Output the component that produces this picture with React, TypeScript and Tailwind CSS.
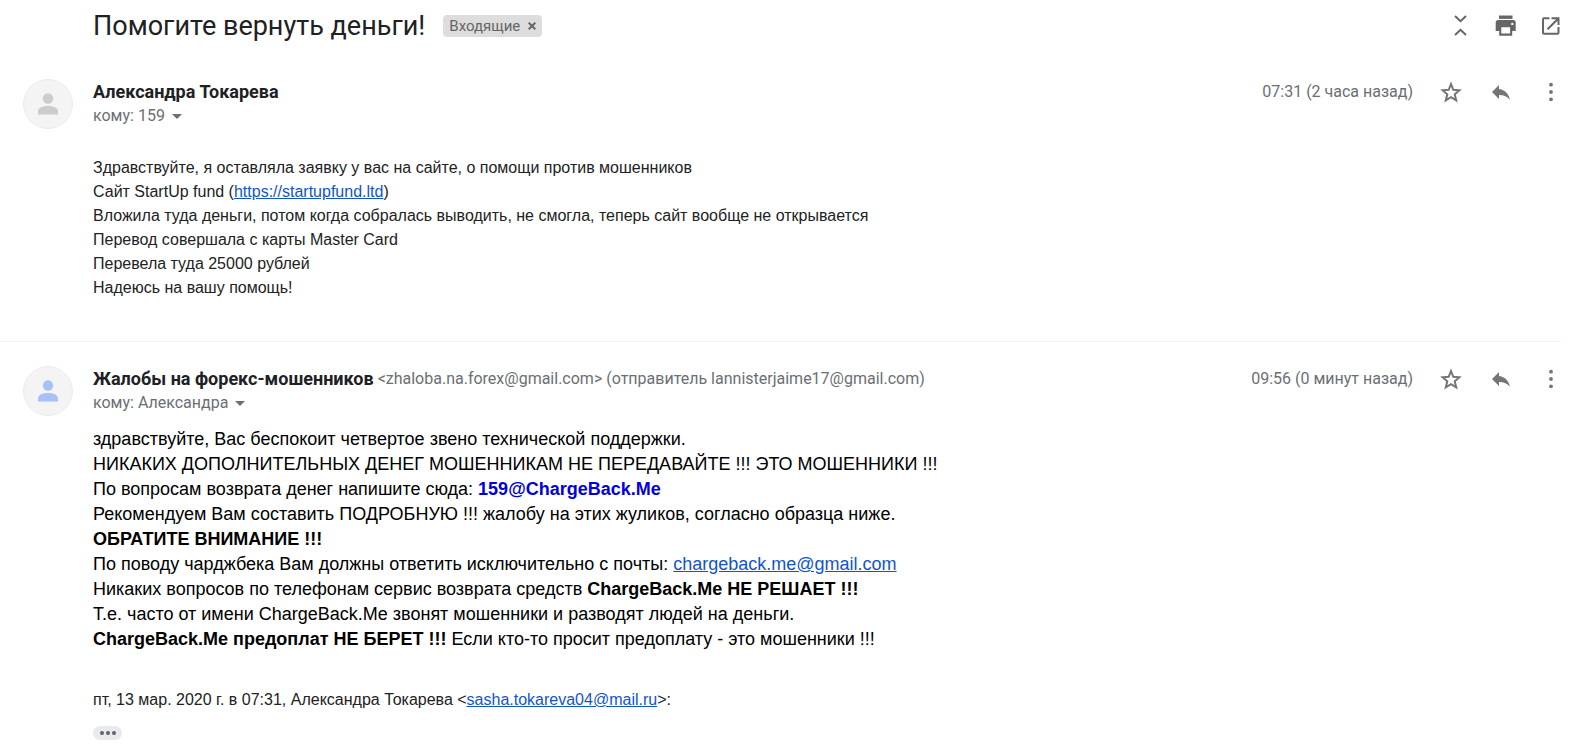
import React from 'react';
import { MdReply, MdArrowDropDown } from 'react-icons/md';

interface MessageProps {
  name: string;
  details?: string;
  to: string;
  time: string;
  avatarClass: string;
  children: React.ReactNode;
}

function PersonIcon({ className }: { className: string }) {
  return (
    <svg viewBox="0 0 22 22" fill="currentColor" className={`size-[22px] ${className}`}>
      <circle cx="11" cy="5.5" r="5.2" />
      <path d="M1 21.5v-3.2C1 14.8 6 13 11 13s10 1.8 10 5.3v3.2z" />
    </svg>
  );
}

function CollapseIcon() {
  return (
    <svg viewBox="0 0 24 24" fill="none" stroke="currentColor" strokeWidth="2" className="size-6">
      <path d="M6 2l5.500 5.200L17 2M6 21l5.500-5.200L17 21" />
    </svg>
  );
}

function PrintIcon() {
  return (
    <svg viewBox="0 0 24 24" fill="currentColor" className="size-6">
      <path d="M5 1.500h13.500v3.400H5z" />
      <path
        fillRule="evenodd"
        d="M4.500 6h14.500a2.700 2.700 0 0 1 2.700 2.700V17h-3.500v4.700H5.200V17H1.700V8.700A2.700 2.700 0 0 1 4.500 6zM7.300 13.300v6.300h8.800v-6.300zM18.300 8.700a1.200 1.200 0 1 0 0 2.400 1.200 1.200 0 0 0 0-2.400z"
      />
    </svg>
  );
}

function NewWindowIcon() {
  return (
    <svg viewBox="0 0 24 24" fill="none" stroke="currentColor" strokeWidth="2" className="size-6">
      <path d="M10.500 4.200H5a1 1 0 0 0-1 1v13.600a1 1 0 0 0 1 1h13.500a1 1 0 0 0 1-1V13" />
      <path d="M12.500 4.200h7V11M19.300 4.500L8.500 15.200" />
    </svg>
  );
}

function StarIcon() {
  return (
    <svg viewBox="0 0 24 24" fill="none" stroke="currentColor" strokeWidth="2" className="size-6">
      <path d="M12 4l2.300 5.800 6.100.5-4.700 4 1.500 6L12 17.100l-5.200 3.200 1.500-6-4.700-4 6.100-.5z" />
    </svg>
  );
}

function MoreIcon() {
  return (
    <svg viewBox="0 0 24 24" fill="currentColor" className="size-6">
      <circle cx="12" cy="4.7" r="1.9" />
      <circle cx="12" cy="12" r="1.9" />
      <circle cx="12" cy="19.3" r="1.9" />
    </svg>
  );
}

function Message({ name, details, to, time, avatarClass, children }: MessageProps) {
  return (
    <article className="flex gap-5 pl-[23px]">
      <div className="flex size-[50px] shrink-0 items-center justify-center rounded-full border border-[#ececec] bg-[#f4f4f4]">
        <PersonIcon className={avatarClass} />
      </div>

      <div className="min-w-0 flex-1">
        <header className="flex items-start justify-between pt-px pr-[18px] font-[Roboto,sans-serif] text-base text-[#6b6f73]">
          <div>
            <div className="flex h-6 items-center gap-1">
              <h2 className="text-lg font-bold text-[#202124]">{name}</h2>
              {details && <span>{details}</span>}
            </div>
            <button className="flex h-6 items-center">
              кому: {to}
              <MdArrowDropDown className="size-6" />
            </button>
          </div>

          <div className="flex h-6 items-center gap-[26px] whitespace-nowrap">
            <time>{time}</time>
            <div className="flex gap-[26px] text-[#757575]">
              <button aria-label="Пометить"><StarIcon /></button>
              <button aria-label="Ответить"><MdReply className="size-6" /></button>
              <button aria-label="Ещё"><MoreIcon /></button>
            </div>
          </div>
        </header>
        {children}
      </div>
    </article>
  );
}

export default function App() {
  return (
    <main className="min-h-screen overflow-hidden bg-white font-['Liberation_Sans',Arial,sans-serif] text-[#222222]">
      <div className="flex items-center justify-between pt-1 pr-[18px] pl-[93px]">
        <div className="flex items-center gap-[18px] font-[Roboto,sans-serif]">
          <h1 className="text-[27px] leading-[44px] text-[#202124]">Помогите вернуть деньги!</h1>
          <span className="flex h-[22px] items-center gap-2 rounded bg-[#dddddd] px-[6px] text-[15px] text-[#666666]">
            Входящие
            <button aria-label="Удалить ярлык">
              <svg viewBox="0 0 8 8" fill="none" stroke="currentColor" strokeWidth="2" className="size-2">
                <path d="M.7.7l6.600 6.600M7.300.7L.7 7.300" />
              </svg>
            </button>
          </span>
        </div>
        <div className="flex gap-[21px] text-[#666666]">
          <button aria-label="Свернуть все"><CollapseIcon /></button>
          <button aria-label="Печать"><PrintIcon /></button>
          <button aria-label="В новом окне"><NewWindowIcon /></button>
        </div>
      </div>

      <div className="mt-[31px]">
        <Message name="Александра Токарева" to="159" time="07:31 (2 часа назад)" avatarClass="text-[#cccccc]">
          <div className="mt-7 mb-[41px] text-base leading-6">
            <p>Здравствуйте, я оставляла заявку у вас на сайте, о помощи против мошенников</p>
            <p>
              Сайт StartUp fund (<a href="https://startupfund.ltd" className="text-[#1155cc] underline">https://startupfund.ltd</a>)
            </p>
            <p>Вложила туда деньги, потом когда собралась выводить, не смогла, теперь сайт вообще не открывается</p>
            <p>Перевод совершала с карты Master Card</p>
            <p>Перевела туда 25000 рублей</p>
            <p>Надеюсь на вашу помощь!</p>
          </div>
        </Message>
      </div>

      <hr className="mr-5 mb-6 border-[#f2f2f2]" />

      <Message
        name="Жалобы на форекс-мошенников"
        details="<zhaloba.na.forex@gmail.com> (отправитель lannisterjaime17@gmail.com)"
        to="Александра"
        time="09:56 (0 минут назад)"
        avatarClass="text-[#a8c2f8]"
      >
        <div className="mt-3 text-lg leading-[25px] text-black">
          <p>здравствуйте, Вас беспокоит четвертое звено технической поддержки.</p>
          <p>НИКАКИХ ДОПОЛНИТЕЛЬНЫХ ДЕНЕГ МОШЕННИКАМ НЕ ПЕРЕДАВАЙТЕ !!! ЭТО МОШЕННИКИ !!!</p>
          <p>
            По вопросам возврата денег напишите сюда: <b className="text-[#0000dd]">159@ChargeBack.Me</b>
          </p>
          <p>Рекомендуем Вам составить ПОДРОБНУЮ !!! жалобу на этих жуликов, согласно образца ниже.</p>
          <p><b>ОБРАТИТЕ ВНИМАНИЕ !!!</b></p>
          <p>
            По поводу чарджбека Вам должны ответить исключительно с почты:{' '}
            <a href="mailto:chargeback.me@gmail.com" className="text-[#1155cc] underline">chargeback.me@gmail.com</a>
          </p>
          <p>
            Никаких вопросов по телефонам сервис возврата средств <b>ChargeBack.Me НЕ РЕШАЕТ !!!</b>
          </p>
          <p>Т.е. часто от имени ChargeBack.Me звонят мошенники и разводят людей на деньги.</p>
          <p>
            <b>ChargeBack.Me предоплат НЕ БЕРЕТ !!!</b> Если кто-то просит предоплату - это мошенники !!!
          </p>
        </div>

        <p className="mt-9 text-base leading-6">
          пт, 13 мар. 2020 г. в 07:31, Александра Токарева &lt;
          <a href="mailto:sasha.tokareva04@mail.ru" className="text-[#1155cc] underline">sasha.tokareva04@mail.ru</a>&gt;:
        </p>
        <button
          aria-label="Показать цитату"
          className="mt-[14px] flex h-[14px] w-[29px] items-center justify-center gap-[2px] rounded-full bg-[#e8eaed]"
        >
          <span className="size-1 rounded-full bg-[#5f6368]" />
          <span className="size-1 rounded-full bg-[#5f6368]" />
          <span className="size-1 rounded-full bg-[#5f6368]" />
        </button>
      </Message>
    </main>
  );
}
